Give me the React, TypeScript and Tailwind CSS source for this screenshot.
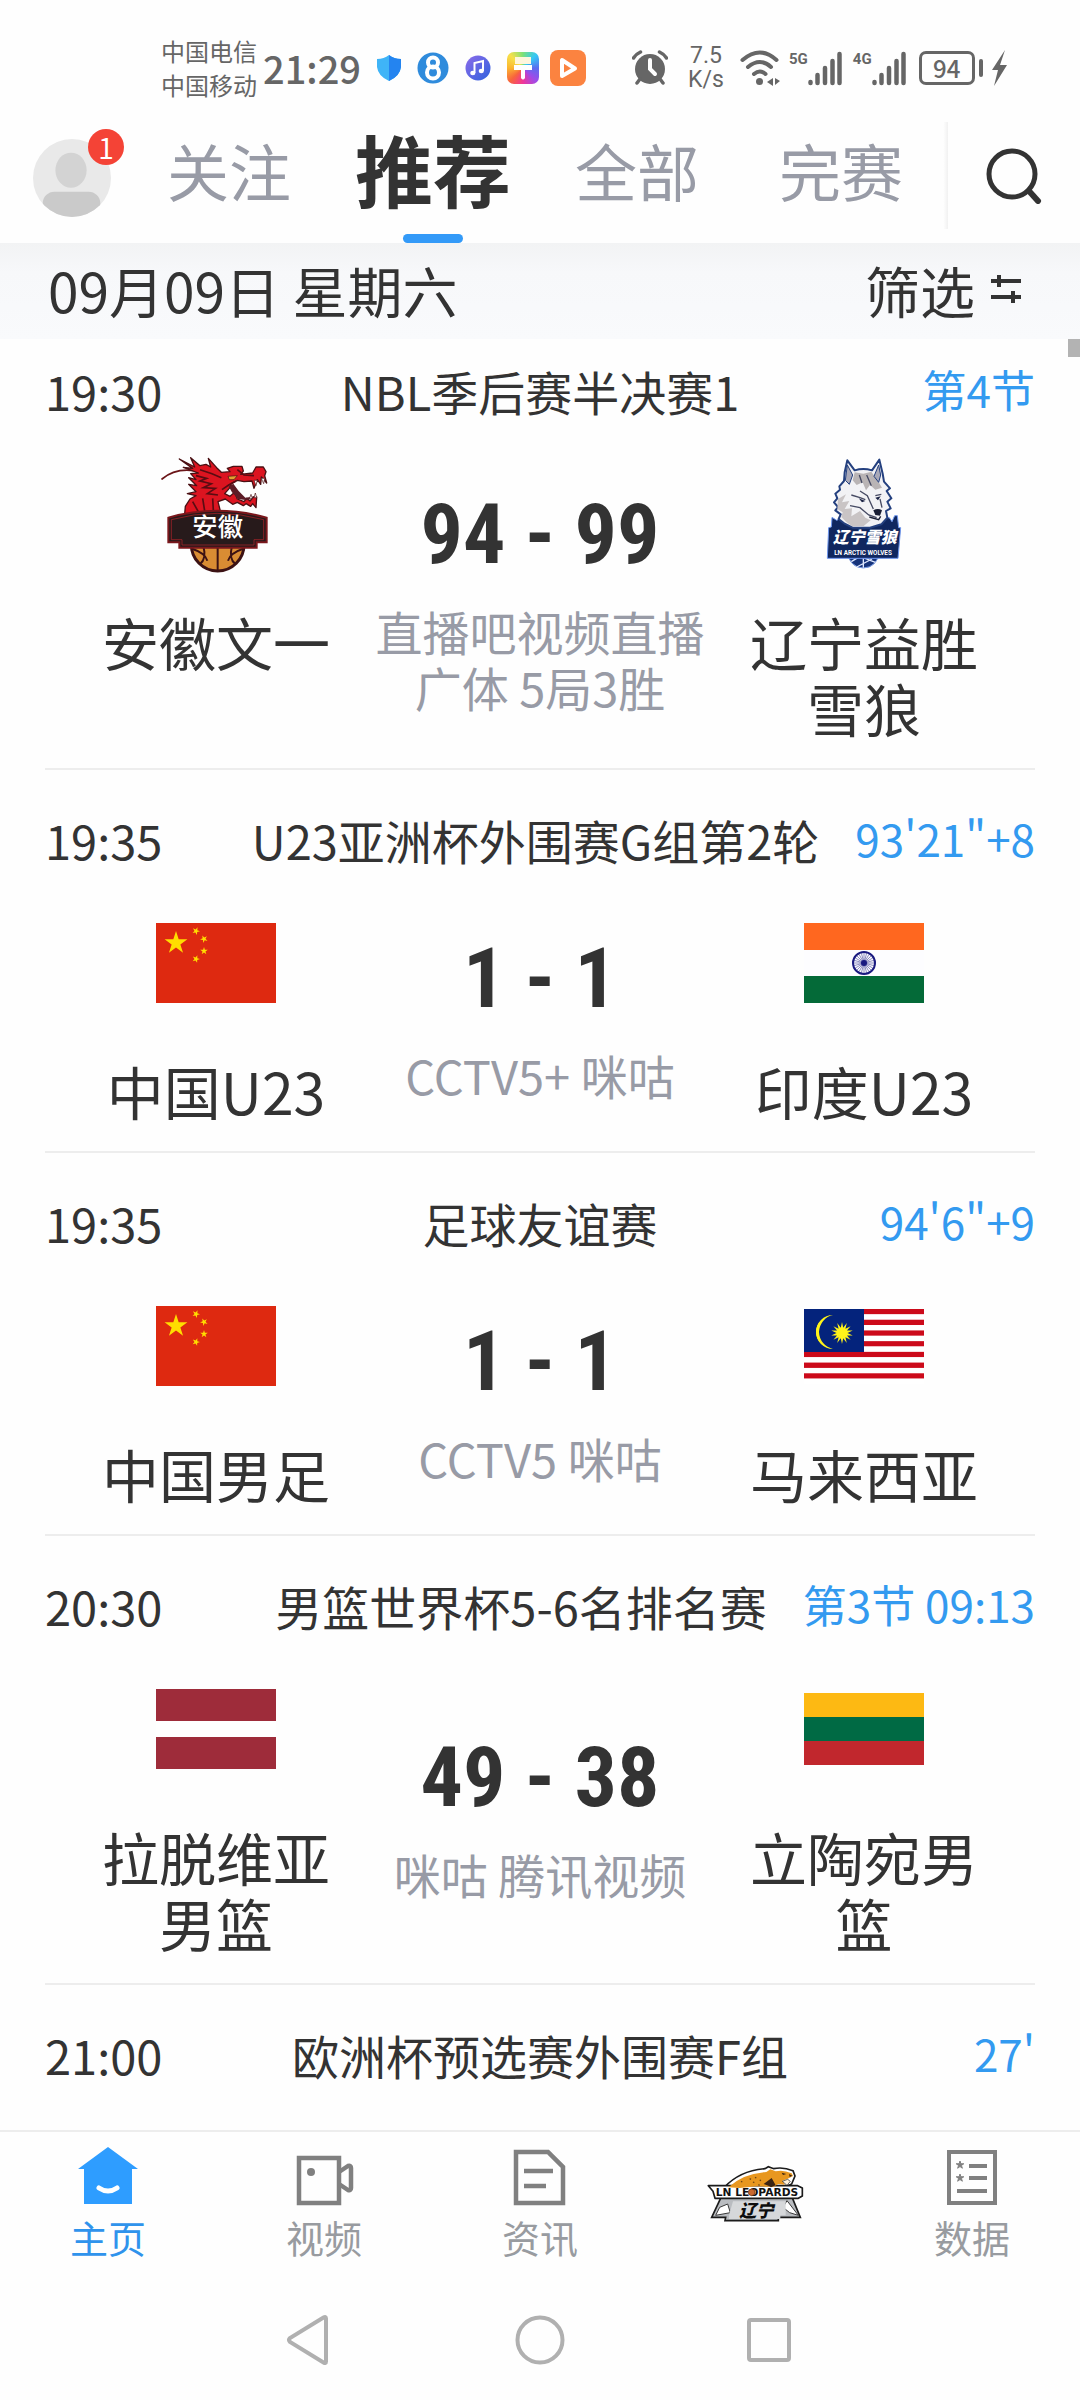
import type { ReactNode } from "react";

function starPoints(cx: number, cy: number, r: number, rotate = 0, spikes = 5, inner = 0.382) {
  const pts: string[] = [];
  for (let i = 0; i < spikes * 2; i++) {
    const radius = i % 2 === 0 ? r : r * inner;
    const a = (Math.PI * i) / spikes - Math.PI / 2 + (rotate * Math.PI) / 180;
    pts.push(`${(cx + radius * Math.cos(a)).toFixed(2)},${(cy + radius * Math.sin(a)).toFixed(2)}`);
  }
  return pts.join(" ");
}

/* ---------- Team logos and flags ---------- */

function ChinaFlag() {
  return (
    <svg viewBox="0 0 30 20" className="w-full" aria-hidden="true">
      <rect width="30" height="20" fill="#de2910" />
      <g fill="#ffde00">
        <polygon points={starPoints(5, 5, 3)} />
        <polygon points={starPoints(10, 2, 1, 23)} />
        <polygon points={starPoints(12, 4, 1, 46)} />
        <polygon points={starPoints(12, 7, 1)} />
        <polygon points={starPoints(10, 9, 1, 20)} />
      </g>
    </svg>
  );
}

function IndiaFlag() {
  const spokes = Array.from({ length: 24 }, (_, i) => (i * Math.PI) / 12);
  return (
    <svg viewBox="0 0 120 80" className="w-full" aria-hidden="true">
      <rect width="120" height="27" fill="#ff671f" />
      <rect y="27" width="120" height="27" fill="#fdfdff" />
      <rect y="53" width="120" height="27" fill="#046a38" />
      <circle cx="60" cy="40" r="11" fill="none" stroke="#1a1a80" strokeWidth="2" />
      <circle cx="60" cy="40" r="3" fill="#1a1a80" />
      {spokes.map((a) => (
        <line key={a} x1="60" y1="40" x2={60 + 10 * Math.cos(a)} y2={40 + 10 * Math.sin(a)} stroke="#1a1a80" strokeWidth="0.5" />
      ))}
    </svg>
  );
}

function MalaysiaFlag() {
  const stripes = Array.from({ length: 14 }, (_, i) => i);
  return (
    <svg viewBox="0 0 120 75" className="w-full" aria-hidden="true">
      {stripes.map((i) => (
        <rect key={i} y={(i * 75) / 14} width="120" height="5.4" fill={i % 2 === 0 ? "#cc0a1a" : "#ffffff"} />
      ))}
      <rect width="60" height="43" fill="#04237c" />
      <path d="M29 6A17 17 0 1 0 29 40A17 18 0 0 1 15 23A17 18 0 0 1 29 6Z" fill="#fff31a" />
      <path d="M28 7A16 16 0 1 0 28 39A15 16 0 0 1 28 7Z" fill="#fff31a" />
      <polygon points={starPoints(38, 24, 11, 0, 14, 0.5)} fill="#fff31a" />
    </svg>
  );
}

function LatviaFlag() {
  return (
    <svg viewBox="0 0 120 80" className="w-full" aria-hidden="true">
      <rect width="120" height="80" fill="#ffffff" />
      <rect width="120" height="32" fill="#9e2c3a" />
      <rect y="48" width="120" height="32" fill="#9e2c3a" />
    </svg>
  );
}

function LithuaniaFlag() {
  return (
    <svg viewBox="0 0 120 72" className="w-full" aria-hidden="true">
      <rect width="120" height="24" fill="#fdb913" />
      <rect y="24" width="120" height="24" fill="#006a44" />
      <rect y="48" width="120" height="24" fill="#c1272d" />
    </svg>
  );
}

function DragonLogo() {
  return (
    <svg viewBox="18 15 360 360" className="w-full" aria-hidden="true">
      <circle cx="203" cy="287" r="79" fill="#d98c33" stroke="#3c1214" strokeWidth="9" />
      <path d="M203 290V364M160 290Q170 330 150 345M128 300Q165 312 172 335M246 290Q236 330 256 345M278 300Q241 312 234 335" fill="none" stroke="#3c1214" strokeWidth="6" />
      <path d="M36 90Q80 52 150 68" fill="none" stroke="#6b1518" strokeWidth="5" strokeLinecap="round" />
      <path
        d="M104 195L106 172L120 150L138 140L112 134L138 128L116 106L140 110L116 86L138 92L122 74L145 72L100 55L128 58L88 30L134 54L122 26L150 50L168 46L182 54L175 28L200 56L214 70L240 68L232 58L250 52L276 52L280 66L272 76L308 72L318 54L340 54L348 68L344 80L350 102L338 88L334 84L332 106L322 92L312 118L306 96L282 98L262 94L244 104L238 118L224 134L240 142L254 130L262 150L282 158L290 148L300 156L310 144L320 144L318 176L308 164L302 172L288 164L280 170L262 160L248 166L226 150L204 158L212 190Z"
        fill="#dc1420"
        stroke="#4a1013"
        strokeWidth="4"
        strokeLinejoin="round"
      />
      <path d="M236 112L250 104L266 126L286 146L316 142L292 154L264 150L246 130Z" fill="#5c1c26" />
      <path d="M138 80L170 88L150 96L184 104L160 116L196 118L172 134L204 138M150 62L186 74L214 86M128 158L146 190M158 148L164 186M188 148L190 184M216 122L236 108L258 96M262 62L282 78L312 80" fill="none" stroke="#5a0c12" strokeWidth="5" />
      <path d="M234 82L262 80L252 92L238 92Z" fill="#e5a02f" stroke="#3c1214" strokeWidth="2" />
      <path d="M312 94l6 16 4-16zM334 88l7 16 3-16zM298 150l5-14 4 12zM312 146l4-14 4 14z" fill="#ffffff" stroke="#4a1013" strokeWidth="2" />
      <path d="M55 206Q200 165 350 206V280H320V296H88V280H55Z" fill="#271a1b" stroke="#7a171c" strokeWidth="6" />
      <path d="M64 212Q200 174 341 212V272H312V288H96V272H64Z" fill="none" stroke="#b8242b" strokeWidth="2" />
      <text x="203" y="262" textAnchor="middle" fontSize="76" fontWeight="500" fill="#ffffff" fontFamily="'Noto Sans CJK SC', sans-serif">
        安徽
      </text>
    </svg>
  );
}

function WolfLogo() {
  return (
    <svg viewBox="-18 15 360 360" className="w-full" aria-hidden="true">
      <circle cx="160" cy="310" r="47" fill="#16337a" stroke="#7da0ea" strokeWidth="3" />
      <path d="M124 338L150 322L196 340M160 322V356M140 354L186 330" stroke="#dfe8ff" strokeWidth="4" fill="none" />
      <path d="M66 205L80 214L98 206L238 206L246 218L254 200L262 200L266 236H272L264 328H52L56 236L64 234Z" fill="#10275f" stroke="#6f97ee" strokeWidth="3" />
      <path
        d="M112 34L134 64Q160 56 186 64L208 32L218 74L222 98L240 118L230 126L244 148L232 158L242 178L228 186L232 206L214 226L180 236L128 236L104 224L86 210L92 196L76 184L84 174L72 160L82 148L76 134L90 122L88 112L102 96L104 70Z"
        fill="#f2f2f5"
        stroke="#24407f"
        strokeWidth="6"
        strokeLinejoin="round"
      />
      <path d="M134 70L160 74L184 68L204 96L216 116L196 122L180 108L168 124L158 100L140 108L128 94Z" fill="#b9b4b5" />
      <path d="M84 150L108 136L96 160L118 156L104 180L126 178L124 202L150 186L166 206L182 214L160 232L126 232L108 218L94 204L98 190L82 180Z" fill="#c9c4c5" />
      <path d="M112 48L128 78L118 106L106 94ZM206 48L212 78L206 100L192 82Z" fill="#a9a9b8" stroke="#24407f" strokeWidth="3" />
      <path d="M124 138L150 146L166 152M196 140L214 136M150 126L172 140L190 180M120 170L150 176L176 198L200 206M210 150L216 176M148 78L156 102M170 78L184 110" fill="none" stroke="#464a63" strokeWidth="4" />
      <path d="M146 148L166 156L156 160ZM196 146L212 142L204 154Z" fill="#1a2244" />
      <path d="M190 184Q204 176 216 184L210 200L196 198Z" fill="#181d33" />
      <path d="M178 204L206 212L212 202" fill="none" stroke="#181d33" strokeWidth="4" />
      <text x="164" y="283" textAnchor="middle" fontSize="48" fontWeight="900" fontStyle="italic" fill="#ffffff" fontFamily="'Noto Sans CJK SC', sans-serif">
        辽宁雪狼
      </text>
      <text x="159" y="317" textAnchor="middle" fontSize="19" fontWeight="700" fill="#ffffff" fontFamily="'Roboto', sans-serif">
        LN ARCTIC WOLVES
      </text>
    </svg>
  );
}

function LeopardsLogo() {
  return (
    <svg viewBox="22 30 294 180" className="h-[60px] w-[98px]" role="img" aria-label="LN Leopards">
      <path d="M68 122L36 190H78L76 200H236V190H302L274 122Z" fill="#b9bcc0" stroke="#1b1b1b" strokeWidth="5" />
      <path d="M60 160L48 184L92 176L84 150ZM262 140L250 160L270 176L296 184Z" fill="#ffffff" stroke="#3a3a3a" strokeWidth="3" />
      <path d="M74 100Q120 50 196 44L206 38L222 44Q250 38 280 50L286 66L276 90L250 102H70Z" fill="#ffffff" stroke="#1b1b1b" strokeWidth="5" />
      <path d="M26 95H294L308 102V126L296 133H46L40 112Z" fill="#ffffff" stroke="#1b1b1b" strokeWidth="5" strokeLinejoin="round" />
      <path d="M86 100Q130 58 200 54L212 46L228 52Q250 46 276 58L280 66L264 74L248 80L256 92L236 90L222 98L170 97L120 102Z" fill="#e8971f" />
      <path d="M216 72L228 94L214 100L208 96L192 90ZM246 56l14 4-10 3zM268 60l10 5-8 4z" fill="#3b2413" />
      <path d="M150 74l4 2m12-6l4 2m10 6l4 2m-60 2l4 2m32 0l4 2m12 6l4 2" stroke="#6b4315" strokeWidth="4" />
      <path d="M248 82L264 76L272 82L262 94Z" fill="#fff3dc" stroke="#1b1b1b" strokeWidth="2" />
      <text x="172" y="127" textAnchor="middle" fontSize="32" fontWeight="700" fill="#111111" fontFamily="'DejaVu Sans', sans-serif">
        LN LEOPARDS
      </text>
      <circle cx="156" cy="115" r="10" fill="#c9682f" stroke="#5c2a12" strokeWidth="2" />
      <path d="M100 142H258V184H242V195H88V184Z" fill="#d6d8da" />
      <text x="170" y="189" textAnchor="middle" fontSize="52" fontWeight="900" fontStyle="italic" fill="#0d0d0d" fontFamily="'Noto Sans CJK SC', sans-serif">
        辽宁
      </text>
    </svg>
  );
}

/* ---------- Status bar ---------- */

function SignalBars() {
  return (
    <svg viewBox="1 0 34 35" className="h-[35px] w-[34px]" aria-hidden="true">
      <g stroke="#666666" strokeWidth="4.500" strokeLinecap="round">
        <path d="M3.500 31V32" />
        <path d="M10.500 24V32" />
        <path d="M18 17V32" />
        <path d="M25.500 10V32" />
        <path d="M32.500 3V32" />
      </g>
    </svg>
  );
}

function StatusBar() {
  return (
    <div className="flex h-[108px] items-center pt-[28px] pl-[161px] text-[#666666]">
      <div className="text-[24px] leading-[34px]">
        <div>中国电信</div>
        <div>中国移动</div>
      </div>
      <div className="ml-[6px] text-[38px] leading-[40px] font-medium">21:29</div>
      <div className="ml-[16px] flex items-center gap-[16px]">
        <svg viewBox="0 0 24 26" className="h-[26px] w-[24px]" aria-hidden="true">
          <path d="M12 0Q17 4 24 4V12Q23 21 12 26Q1 21 0 12V4Q7 4 12 0Z" fill="#3fb4f7" />
          <path d="M12 0Q17 4 24 4V12Q23 21 12 26Z" fill="#2484f0" />
        </svg>
        <svg viewBox="0 0 32 32" className="h-[32px] w-[32px]" aria-hidden="true">
          <circle cx="16" cy="16" r="15.500" fill="#2f8bdc" />
          <circle cx="16" cy="10.500" r="5" fill="none" stroke="#ffffff" strokeWidth="4" />
          <circle cx="16" cy="20.500" r="6" fill="none" stroke="#ffffff" strokeWidth="4" />
        </svg>
        <svg viewBox="0 0 26 26" className="h-[26px] w-[26px]" aria-hidden="true">
          <defs>
            <linearGradient id="music" x1="0" y1="0" x2="1" y2="1">
              <stop offset="0" stopColor="#8c6bea" />
              <stop offset="1" stopColor="#2f62dd" />
            </linearGradient>
          </defs>
          <circle cx="13" cy="13" r="12.500" fill="url(#music)" />
          <path d="M9.500 18V8L18 6V16" fill="none" stroke="#ffffff" strokeWidth="2" />
          <ellipse cx="7.800" cy="18" rx="2.600" ry="2.200" fill="#ffffff" />
          <ellipse cx="16.300" cy="16" rx="2.600" ry="2.200" fill="#ffffff" />
        </svg>
        <div className="flex h-[32px] w-[32px] items-center justify-center rounded-[7px] bg-[conic-gradient(from_0deg,#7be07a,#35c8f5,#5a6cf0,#a04be8,#f0359a,#f8643c,#fbb52f,#f6e04a,#7be07a)]">
          <svg viewBox="0 0 20 24" className="h-[24px] w-[20px]" aria-hidden="true">
            <path d="M2 1H18V8H2Z" fill="#fff6dc" />
            <path d="M1 9H19V14H12V22Q10 25 8 22V14H1Z" fill="#ffffff" />
          </svg>
        </div>
        <svg viewBox="0 0 36 36" className="-ml-[5px] h-[36px] w-[36px]" aria-hidden="true">
          <rect width="36" height="36" rx="8" fill="#fb8340" />
          <path d="M12 10V26L25 18.500Z" fill="none" stroke="#ffffff" strokeWidth="4" strokeLinejoin="round" />
        </svg>
      </div>
      <svg viewBox="0 0 36 36" className="ml-[46px] h-[36px] w-[36px]" aria-hidden="true">
        <circle cx="18" cy="19" r="15" fill="#666666" />
        <path d="M1.500 8Q4 4 8.500 2M34.500 8Q32 4 27.500 2M5 33L8 29M31 33L28 29" stroke="#666666" strokeWidth="3.500" strokeLinecap="round" fill="none" />
        <path d="M18 10V19L23 24" stroke="#ffffff" strokeWidth="4" strokeLinecap="round" fill="none" />
      </svg>
      <div className="ml-[18px] w-[40px] text-center font-['Roboto',sans-serif] text-[23px] leading-[24px]">
        <div>7.5</div>
        <div>K/s</div>
      </div>
      <svg viewBox="0 0 42 36" className="ml-[14px] h-[36px] w-[42px]" aria-hidden="true">
        <g fill="none" stroke="#666666" strokeWidth="4" strokeLinecap="round">
          <path d="M2.500 10Q20 -5 36.500 10" />
          <path d="M8 17Q20 7 31 17" />
          <path d="M14 24Q20 19 25.500 24" />
        </g>
        <circle cx="19.500" cy="31.500" r="3.500" fill="#666666" />
        <path d="M33 28V36L27 32ZM35 28V35L40 31Z" fill="#666666" />
      </svg>
      <div className="ml-[7px] flex items-start">
        <span className="font-['Roboto',sans-serif] text-[15px] leading-[16px] font-bold">5G</span>
        <SignalBars />
      </div>
      <div className="ml-[11px] flex items-start">
        <span className="font-['Roboto',sans-serif] text-[15px] leading-[16px] font-bold">4G</span>
        <SignalBars />
      </div>
      <div className="ml-[13px] flex h-[34px] w-[56px] items-center justify-center rounded-[7px] border-[3px] border-[#666666] text-[24px] leading-[24px] font-medium">
        94
      </div>
      <div className="ml-[4px] h-[18px] w-[4px] rounded-full bg-[#666666]" />
      <svg viewBox="0 0 15 36" className="ml-[9px] h-[36px] w-[15px]" aria-hidden="true">
        <path d="M13 0L0 20H6L2 36L15 15H8Z" fill="#666666" />
      </svg>
    </div>
  );
}

/* ---------- Top tabs ---------- */

const tabs = ["关注", "推荐", "全部", "完赛"];

function TopTabs() {
  return (
    <header className="flex h-[135px] items-stretch">
      <button className="flex w-[127px] items-center pt-1 pl-[33px]" aria-label="我的">
        <span className="relative">
          <svg viewBox="0 0 80 80" className="h-[78px] w-[78px]" aria-hidden="true">
            <defs>
              <clipPath id="avatar">
                <circle cx="40" cy="40" r="40" />
              </clipPath>
            </defs>
            <g clipPath="url(#avatar)">
              <rect width="80" height="80" fill="#e9e9e9" />
              <ellipse cx="39" cy="32" rx="16" ry="18" fill="#d3d3d3" />
              <rect x="10" y="54" width="59" height="40" rx="12" fill="#cacaca" />
            </g>
          </svg>
          <span className="absolute -top-[10px] -right-[13px] flex h-[36px] w-[36px] items-center justify-center rounded-full bg-[#f44336] text-[28px] leading-[28px] text-white">
            1
          </span>
        </span>
      </button>
      <div className="grid flex-1 grid-cols-4">
        {tabs.map((tab) =>
          tab === "推荐" ? (
            <button key={tab} className="relative flex items-center justify-center pb-4 text-[78px] leading-[90px] font-bold whitespace-nowrap text-[#333333]">
              {tab}
              <span className="absolute bottom-0 left-1/2 h-[9px] w-[60px] -translate-x-1/2 rounded-full bg-[#339af8]" />
            </button>
          ) : (
            <button key={tab} className="flex items-center justify-center pb-3 text-[62px] leading-[90px] whitespace-nowrap text-[#989ba6]">
              {tab}
            </button>
          ),
        )}
      </div>
      <div className="my-[14px] w-[5px] bg-linear-to-r from-white to-[#f1f1f1]" />
      <button className="flex w-[132px] items-center justify-center" aria-label="搜索">
        <svg viewBox="0 0 56 56" className="h-[56px] w-[56px]" aria-hidden="true">
          <circle cx="26" cy="26" r="23" fill="none" stroke="#333333" strokeWidth="5" />
          <path d="M43 43L52 53" stroke="#333333" strokeWidth="6" strokeLinecap="round" />
        </svg>
      </button>
    </header>
  );
}

/* ---------- Matches ---------- */

type Match = {
  time: string;
  title: string;
  status: string;
  home?: { name: string; logo: ReactNode };
  away?: { name: string; logo: ReactNode };
  score?: string;
  channels?: string;
};

const matches: Match[] = [
  {
    time: "19:30",
    title: "NBL季后赛半决赛1",
    status: "第4节",
    home: { name: "安徽文一", logo: <DragonLogo /> },
    away: { name: "辽宁益胜雪狼", logo: <WolfLogo /> },
    score: "94 - 99",
    channels: "直播吧视频直播 广体 5局3胜",
  },
  {
    time: "19:35",
    title: "U23亚洲杯外围赛G组第2轮",
    status: "93'21\"+8",
    home: { name: "中国U23", logo: <ChinaFlag /> },
    away: { name: "印度U23", logo: <IndiaFlag /> },
    score: "1 - 1",
    channels: "CCTV5+ 咪咕",
  },
  {
    time: "19:35",
    title: "足球友谊赛",
    status: "94'6\"+9",
    home: { name: "中国男足", logo: <ChinaFlag /> },
    away: { name: "马来西亚", logo: <MalaysiaFlag /> },
    score: "1 - 1",
    channels: "CCTV5 咪咕",
  },
  {
    time: "20:30",
    title: "男篮世界杯5-6名排名赛",
    status: "第3节 09:13",
    home: { name: "拉脱维亚男篮", logo: <LatviaFlag /> },
    away: { name: "立陶宛男篮", logo: <LithuaniaFlag /> },
    score: "49 - 38",
    channels: "咪咕 腾讯视频",
  },
  { time: "21:00", title: "欧洲杯预选赛外围赛F组", status: "27'" },
];

function Team({ name, logo }: { name: string; logo: ReactNode }) {
  return (
    <div className="flex w-[240px] flex-col items-center gap-[34px]">
      <div className="flex h-[120px] w-[120px] items-center">{logo}</div>
      <div className="text-center text-[57px] leading-[66px]">{name}</div>
    </div>
  );
}

function MatchItem({ match }: { match: Match }) {
  return (
    <li className="mx-[45px] border-b-2 border-[#ededed] pt-[35px] first:pt-[17px] last:border-b-0">
      <div className="grid grid-cols-[1fr_auto_1fr] items-center leading-[66px] whitespace-nowrap">
        <time className="text-[47px]">{match.time}</time>
        <h2 className="text-[47px]">{match.title}</h2>
        <span className="pb-1 pl-[36px] text-right text-[44px] text-[#339af0]">{match.status}</span>
      </div>
      {match.home && match.away && (
        <div className="mx-[51px] mt-[28px] mb-[28px] flex justify-between">
          <Team {...match.home} />
          <div className="flex flex-1 flex-col items-center justify-center px-8">
            <div className="font-['Roboto_Condensed','Roboto',sans-serif] text-[84px] leading-[112px] font-bold whitespace-nowrap">
              {match.score}
            </div>
            <div className="mt-3 text-center text-[47px] leading-[56px] text-[#989ba6]">{match.channels}</div>
          </div>
          <Team {...match.away} />
        </div>
      )}
      {!match.home && <div className="h-[39px]" />}
    </li>
  );
}

/* ---------- Bottom navigation ---------- */

const navItems: { label: string; active?: boolean; icon: ReactNode }[] = [
  {
    label: "主页",
    active: true,
    icon: (
      <svg viewBox="0 0 60 60" className="h-[60px] w-[60px]" aria-hidden="true">
        <path d="M30 1L60 23H54V58H6V23H0Z" fill="#2e9dff" />
        <path d="M21 42Q30 48 39 42" fill="none" stroke="#ffffff" strokeWidth="5" strokeLinecap="round" />
      </svg>
    ),
  },
  {
    label: "视频",
    icon: (
      <svg viewBox="0 0 60 60" className="h-[60px] w-[60px]" aria-hidden="true">
        <g fill="none" stroke="#808080" strokeWidth="4.500">
          <rect x="5" y="12" width="40" height="45" />
          <path d="M45 26L54 20Q57 19 57 22V42Q57 45 54 44L45 38" />
        </g>
        <circle cx="17" cy="26" r="4" fill="#808080" />
      </svg>
    ),
  },
  {
    label: "资讯",
    icon: (
      <svg viewBox="0 0 60 60" className="h-[60px] w-[60px]" aria-hidden="true">
        <path d="M6 6H38L53 21V57H6ZM14 25H43M14 40H36" fill="none" stroke="#808080" strokeWidth="4.500" />
      </svg>
    ),
  },
  { label: "", icon: <LeopardsLogo /> },
  {
    label: "数据",
    icon: (
      <svg viewBox="0 0 60 60" className="h-[60px] w-[60px]" aria-hidden="true">
        <path d="M7 6H53V57H7ZM27 20H45M27 32H45M15 45H45" fill="none" stroke="#808080" strokeWidth="4" />
        <polygon points={starPoints(18, 19, 4)} fill="#808080" stroke="#808080" />
        <polygon points={starPoints(18, 32, 4)} fill="#808080" stroke="#808080" />
      </svg>
    ),
  },
];

function BottomNav() {
  return (
    <nav className="grid h-[150px] grid-cols-5 border-t-2 border-[#ededed] bg-[#fefefe]">
      {navItems.map((item) =>
        item.label ? (
          <a
            key={item.label}
            href="#"
            className={
              item.active
                ? "flex flex-col items-center pt-[14px] text-[38px] leading-[46px] text-[#2f93ec]"
                : "flex flex-col items-center pt-[14px] text-[38px] leading-[46px] text-[#989ba0]"
            }
          >
            {item.icon}
            <span className="mt-[8px]">{item.label}</span>
          </a>
        ) : (
          <a key="leopards" href="#" className="flex justify-center pt-[32px]">
            {item.icon}
          </a>
        ),
      )}
    </nav>
  );
}

function SystemNav() {
  return (
    <div className="flex h-[120px] items-center justify-center gap-[170px]">
      <button aria-label="返回">
        <svg viewBox="0 0 60 60" className="h-[60px] w-[60px]" aria-hidden="true">
          <path d="M46 8.500V51.500Q46 54 43.500 52.500L10 32Q8 30 10 28L43.500 7.500Q46 6 46 8.500Z" fill="none" stroke="#b0b0b0" strokeWidth="4" />
        </svg>
      </button>
      <button aria-label="主屏幕">
        <svg viewBox="0 0 60 60" className="h-[60px] w-[60px]" aria-hidden="true">
          <circle cx="30" cy="30" r="22.500" fill="none" stroke="#b0b0b0" strokeWidth="4" />
        </svg>
      </button>
      <button aria-label="最近任务">
        <svg viewBox="0 0 60 60" className="h-[60px] w-[60px]" aria-hidden="true">
          <rect x="9" y="10" width="40" height="40" rx="2" fill="none" stroke="#b0b0b0" strokeWidth="4" />
        </svg>
      </button>
    </div>
  );
}

export default function App() {
  return (
    <div className="flex min-h-screen flex-col bg-[#fefefe] font-['Noto_Sans_CJK_SC',sans-serif] text-[#333333]" lang="zh-CN">
      <StatusBar />
      <TopTabs />
      <div className="flex items-center justify-between bg-linear-to-b from-[#f2f3f4] via-[#f7f8fa] via-30% to-[#f9fafc] pr-[59px] pb-1 pl-[48px] text-[55px] leading-[92px]">
        <h1>09月09日 星期六</h1>
        <button className="flex items-center gap-[16px]">
          筛选
          <svg viewBox="0 0 30 30" className="h-[30px] w-[30px]" aria-hidden="true">
            <path d="M0 7H30M8 1V13M0 23H30M22 17V29" fill="none" stroke="#333333" strokeWidth="4" />
          </svg>
        </button>
      </div>
      <main className="relative flex-1">
        <div className="absolute top-0 right-0 h-[18px] w-[12px] bg-[#b3b3b3]" />
        <ul>
          {matches.map((match) => (
            <MatchItem key={`${match.time} ${match.title}`} match={match} />
          ))}
        </ul>
      </main>
      <BottomNav />
      <SystemNav />
    </div>
  );
}
